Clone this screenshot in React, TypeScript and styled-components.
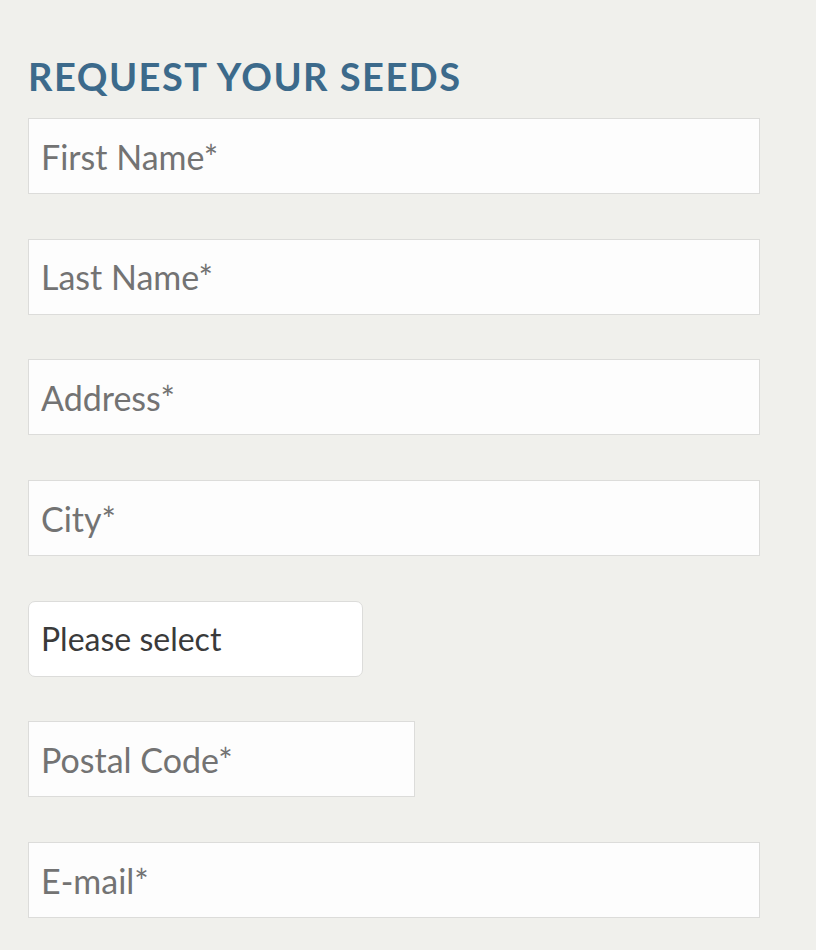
import React from 'react';
import styled, { createGlobalStyle } from 'styled-components';

const GlobalStyle = createGlobalStyle`
  html, body {
    margin: 0;
    padding: 0;
    background: #f0f0ec;
  }
  body {
    font-family: Lato, 'Open Sans', sans-serif;
  }
`;

const Page = styled.div`
  padding: 54px 28px 40px;
`;

const Heading = styled.h2`
  margin: 0 0 20px;
  font-family: Lato, sans-serif;
  font-weight: 700;
  font-size: 38px;
  line-height: 44px;
  color: #3c6a8b;
  letter-spacing: 1.5px;
`;

const Form = styled.form`
  display: flex;
  flex-direction: column;
  align-items: flex-start;
  gap: 44.7px;
`;

const Field = styled.input<{ $width: number }>`
  box-sizing: border-box;
  width: ${(p) => p.$width}px;
  height: 76px;
  margin: 0;
  padding: 0 12px;
  border: 1px solid #dcdcda;
  border-radius: 0;
  background: #fdfdfd;
  font-family: Lato, sans-serif;
  font-size: 34px;
  color: #333;
  outline: none;

  &::placeholder {
    color: #737373;
    opacity: 1;
  }
`;

const Select = styled.select`
  box-sizing: border-box;
  width: 335px;
  height: 76px;
  margin: 0;
  padding: 0 12px;
  border: 1px solid #dcdcda;
  border-radius: 7px;
  background: #ffffff;
  font-family: Lato, sans-serif;
  font-size: 32px;
  color: #3a3a3a;
  appearance: none;
  outline: none;
`;

const fields: { placeholder: string; width: number }[] = [
  { placeholder: 'First Name*', width: 732 },
  { placeholder: 'Last Name*', width: 732 },
  { placeholder: 'Address*', width: 732 },
  { placeholder: 'City*', width: 732 },
];

const App = () => (
  <>
    <GlobalStyle />
    <Page>
      <Heading>REQUEST YOUR SEEDS</Heading>
      <Form>
        {fields.map((f) => (
          <Field key={f.placeholder} placeholder={f.placeholder} $width={f.width} />
        ))}
        <Select defaultValue="">
          <option value="">Please select</option>
        </Select>
        <Field placeholder="Postal Code*" $width={387} />
        <Field placeholder="E-mail*" $width={732} />
      </Form>
    </Page>
  </>
);

export default App;
